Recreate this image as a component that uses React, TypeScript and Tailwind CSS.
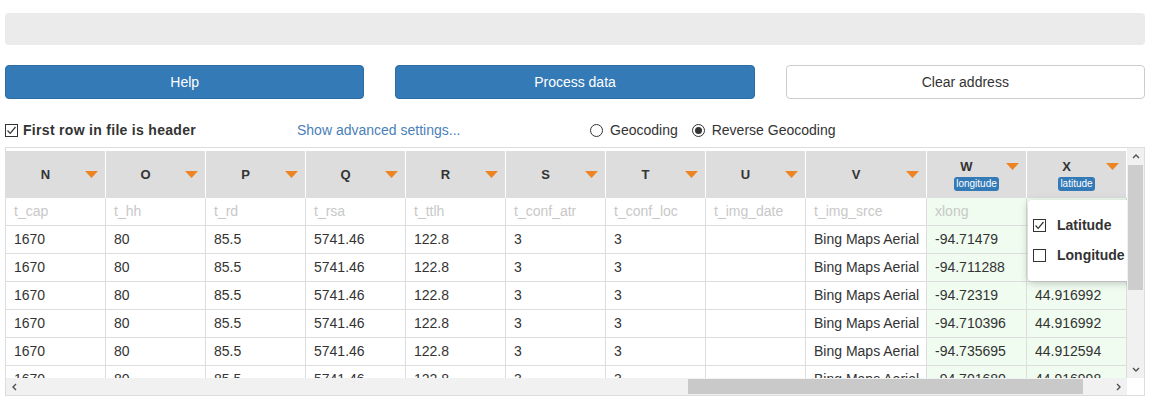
import { FC } from "react"

interface Col {
  letter: string
  field: string
  width: string
  badge?: string
  geo?: boolean
}

const columns: Col[] = [
  { letter: "N", field: "t_cap", width: "w-[100px]" },
  { letter: "O", field: "t_hh", width: "w-[100px]" },
  { letter: "P", field: "t_rd", width: "w-[100px]" },
  { letter: "Q", field: "t_rsa", width: "w-[100px]" },
  { letter: "R", field: "t_ttlh", width: "w-[100px]" },
  { letter: "S", field: "t_conf_atr", width: "w-[100px]" },
  { letter: "T", field: "t_conf_loc", width: "w-[100px]" },
  { letter: "U", field: "t_img_date", width: "w-[100px]" },
  { letter: "V", field: "t_img_srce", width: "w-[121px]" },
  { letter: "W", field: "xlong", width: "w-[100px]", badge: "longitude", geo: true },
  { letter: "X", field: "ylat", width: "w-[100px]", badge: "latitude", geo: true },
]

const base = ["1670", "80", "85.5", "5741.46", "122.8", "3", "3", "", "Bing Maps Aerial"]
const lon = ["-94.71479", "-94.711288", "-94.72319", "-94.710396", "-94.735695", "-94.701680"]
const lat = ["44.916992", "44.916992", "44.916992", "44.916992", "44.912594", "44.916998"]
const rows = lon.map((l, i) => [...base, l, lat[i]])

const Caret = () => (
  <svg width="13" height="7" viewBox="0 0 13 7" className="shrink-0">
    <polygon points="0,0 13,0 6.5,7" fill="#ec8423" />
  </svg>
)

const CheckBox: FC<{ checked?: boolean }> = ({ checked }) => (
  <span className="w-[13px] h-[13px] border border-[#333] bg-white flex items-center justify-center shrink-0">
    {checked && (
      <svg width="11" height="11" viewBox="0 0 11 11">
        <path d="M1.5 5.5 L4.2 8.3 L9.5 2" fill="none" stroke="#333" strokeWidth="1.2" />
      </svg>
    )}
  </span>
)

const Radio: FC<{ checked?: boolean }> = ({ checked }) => (
  <span className="w-[13px] h-[13px] rounded-full border border-[#333] bg-white flex items-center justify-center shrink-0">
    {checked && <span className="w-[7px] h-[7px] rounded-full bg-[#333]" />}
  </span>
)

const Chevron: FC<{ dir: "up" | "down" | "left" | "right" }> = ({ dir }) => {
  const d = {
    up: "M1 5 L4 2 L7 5",
    down: "M1 2 L4 5 L7 2",
    left: "M5 1 L2 4 L5 7",
    right: "M2 1 L5 4 L2 7",
  }[dir]
  return (
    <svg width="8" height="8" viewBox="0 0 8 8">
      <path d={d} fill="none" stroke="#505050" strokeWidth="1.4" />
    </svg>
  )
}

const HeaderCell: FC<{ col: Col }> = ({ col }) => (
  <div className={`${col.width} shrink-0 h-full border-r border-white flex flex-col justify-center`}>
    <div className="flex items-center pr-[7px]">
      <span className="flex-1 text-center font-bold text-[13px] leading-[16px] text-[#333]">{col.letter}</span>
      <Caret />
    </div>
    {col.badge && (
      <div className="flex justify-center mt-[2px]">
        <span className="bg-[#337ab7] text-white text-[10px] leading-[14px] px-[2px] rounded-[3px]">
          {col.badge}
        </span>
      </div>
    )}
  </div>
)

const App: FC = () => {
  return (
    <div className="w-[1158px] h-[410px] bg-white pl-[5px] pr-[13px] pt-[13px] font-['Liberation_Sans',Arial,sans-serif] text-[14px] text-[#333] overflow-hidden">
      <div className="h-[32px] rounded-[4px] bg-[#ebebeb]" />

      <div className="mt-[20px] flex gap-[31px]">
        <button className="flex-1 h-[34px] rounded-[4px] bg-[#337ab7] border border-[#2e6da4] text-white">Help</button>
        <button className="flex-1 h-[34px] rounded-[4px] bg-[#337ab7] border border-[#2e6da4] text-white">Process data</button>
        <button className="flex-1 h-[34px] rounded-[4px] bg-white border border-[#ccc] text-[#333]">Clear address</button>
      </div>

      <div className="mt-[21px] h-[20px] flex items-center">
        <div className="w-[292px] flex items-center gap-[5px]">
          <CheckBox checked />
          <span className="font-bold text-[14px] tracking-[0.3px]">First row in file is header</span>
        </div>
        <div className="w-[293px] text-[#4a7fb8]">Show advanced settings...</div>
        <div className="flex items-center gap-[7px]">
          <Radio />
          <span>Geocoding</span>
          <span className="w-0" />
          <Radio checked />
          <span>Reverse Geocoding</span>
        </div>
      </div>

      <div className="mt-[7px] h-[249px] border border-[#ddd] flex flex-col">
        <div className="flex h-[230px]">
          <div className="relative flex-1 overflow-hidden pt-[3px]">
            <div className="flex h-[47px] bg-[#dddddd]">
              {columns.map((c) => (
                <HeaderCell key={c.letter} col={c} />
              ))}
            </div>
            <div className="flex h-[28px]">
              {columns.map((c) => (
                <div
                  key={c.letter}
                  className={`${c.width} shrink-0 border-r border-b border-[#ddd] px-[8px] flex items-center text-[#c8c8c8] ${c.geo ? "bg-[#effcef]" : ""}`}
                >
                  {c.field}
                </div>
              ))}
            </div>
            {rows.map((r, i) => (
              <div key={i} className="flex h-[28px]">
                {columns.map((c, j) => (
                  <div
                    key={c.letter}
                    className={`${c.width} shrink-0 border-r border-b border-[#ddd] px-[8px] flex items-center whitespace-nowrap ${c.geo ? "bg-[#effcef]" : ""}`}
                  >
                    {r[j]}
                  </div>
                ))}
              </div>
            ))}

            <div className="absolute left-[1022px] top-[52px] w-[130px] h-[81px] bg-white rounded-[4px] shadow-[0_2px_8px_rgba(0,0,0,0.22)] flex flex-col justify-center gap-[9px] pl-[5px]">
              <div className="flex items-center gap-[11px]">
                <CheckBox checked />
                <span className="font-bold">Latitude</span>
              </div>
              <div className="flex items-center gap-[11px]">
                <CheckBox />
                <span className="font-bold">Longitude</span>
              </div>
            </div>
          </div>

          <div className="w-[17px] bg-[#f1f1f1] flex flex-col">
            <div className="h-[17px] flex items-center justify-center">
              <Chevron dir="up" />
            </div>
            <div className="h-[125px] mx-[1px] bg-[#cdcdcd]" />
            <div className="flex-1" />
            <div className="h-[17px] flex items-center justify-center">
              <Chevron dir="down" />
            </div>
          </div>
        </div>

        <div className="flex h-[17px]">
          <div className="flex-1 bg-[#f1f1f1] flex items-center">
            <div className="w-[17px] flex items-center justify-center">
              <Chevron dir="left" />
            </div>
            <div className="w-[665px]" />
            <div className="w-[395px] h-[15px] bg-[#c9c9c9]" />
            <div className="flex-1" />
            <div className="w-[17px] flex items-center justify-center">
              <Chevron dir="right" />
            </div>
          </div>
          <div className="w-[17px] bg-white" />
        </div>
      </div>
    </div>
  )
}

export default App
